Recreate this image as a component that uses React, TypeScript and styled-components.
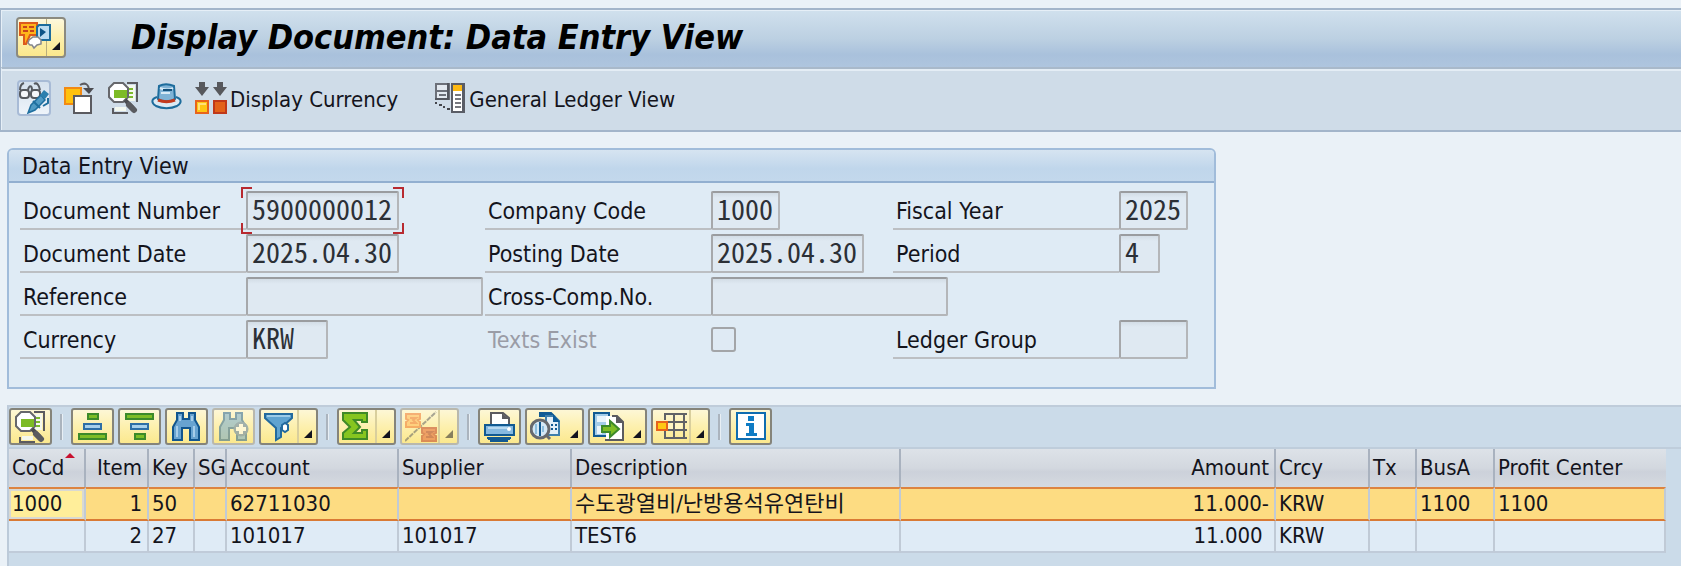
import React from 'react';
import styled, { createGlobalStyle, css } from 'styled-components';

const GlobalStyle = createGlobalStyle`
  *, *::before, *::after { box-sizing: border-box; }
  html { background: #eaf1f7; }
  body {
    margin: 0;
    color: #14141c;
    font: 23px/30px "DejaVu Sans Condensed", "Noto Sans", "Noto Sans CJK KR", sans-serif;
  }
  button, input { font: inherit; color: inherit; }
  svg { display: block; flex: none; }
`;

const Page = styled.div`
  display: flex;
  flex-direction: column;
  min-height: 100vh;
  background: #eaf1f7;
`;

const AppFrame = styled.header`
  margin-top: 8px;
  border: solid #a3b5ca;
  border-width: 2px 0 2px 1px;
`;

const TitleBar = styled.div`
  display: flex;
  align-items: center;
  gap: 65px;
  height: 57px;
  padding: 0 16px 4px 14px;
  border-top: 1px solid #e6eff7;
  border-left: 1px solid #e6eff7;
  background: linear-gradient(#d0e0ed, #bcd0e2 50%, #a9c1dc 78%, #afc5de);
`;

const Title = styled.h1`
  margin: 0;
  color: #000;
  font-size: 34px;
  line-height: 40px;
  font-style: italic;
  font-weight: 700;
  white-space: nowrap;
`;

const MenuButton = styled.button`
  display: flex;
  width: 50px;
  height: 41px;
  padding: 0;
  border: 2px solid #8b8a80;
  border-radius: 4px;
  background: linear-gradient(#fdf8dc, #fdf0ae 50%, #fbe88c);
`;

const ActionBar = styled.div`
  display: flex;
  align-items: center;
  gap: 12px;
  height: 63px;
  padding: 0 15px 4px;
  border-top: 2px solid #a9b9ca;
  border-left: 1px solid #e6eff7;
  background: #cfdce8;
  box-shadow: inset 0 2px #e4edf5;
`;

const ActionButton = styled.button<{ $framed?: boolean; $apart?: boolean }>`
  display: flex;
  align-items: center;
  gap: 3px;
  height: 36px;
  margin: 0 0 0 ${p => (p.$apart ? 24 : 0)}px;
  padding: 0;
  border: 0;
  background: none;
  font-size: 22px;
  white-space: nowrap;
  ${p => p.$framed && css`
    border: 2px solid #a8bbd6;
    border-radius: 4px;
    background: linear-gradient(#d5e1ee, #eef4fa);
  `}
`;

const ActionText = styled.span`
  padding-top: 4px;
`;

const GroupBox = styled.section`
  width: calc(100% - 14px);
  max-width: 1209px;
  margin: 16px 7px 0;
  border: 2px solid #a1bcda;
  border-radius: 6px 6px 0 0;
  background: #dfebf5;
`;

const GroupTitle = styled.h2`
  margin: 0;
  height: 33px;
  padding: 0 13px;
  border-bottom: 2px solid #92afd0;
  border-radius: 4px 4px 0 0;
  background: linear-gradient(#d6e4f1, #c0d6eb 60%, #c3d8ec);
  font-size: 23px;
  line-height: 33px;
  font-weight: 400;
`;

const FieldGrid = styled.div`
  display: grid;
  grid-template-columns: 465px 408px 1fr;
  row-gap: 4px;
  padding: 8px 11px 28px;
`;

const FieldRow = styled.div`
  display: flex;
  height: 39px;
`;

const FieldLabel = styled.label<{ $muted?: boolean }>`
  flex: none;
  width: 226px;
  padding: 5px 0 0 3px;
  border-bottom: 2px solid ${p => (p.$muted ? 'transparent' : '#bcbfc3')};
  color: ${p => (p.$muted ? '#9a9ca6' : 'inherit')};
  white-space: nowrap;
`;

const ValueWrap = styled.span`
  position: relative;
  display: flex;
`;

const ValueBox = styled.input<{ $w: number }>`
  width: ${p => p.$w}px;
  height: 39px;
  margin: 0;
  padding: 0 0 6px 4px;
  border: 2px solid #b4b6b9;
  border-top-color: #9a9c9f;
  border-left-color: #a6a8ab;
  border-radius: 2px;
  outline: 0;
  background: linear-gradient(#d3dde6, #dfe9f2 5px);
  color: #2c3036;
  font: 28px/29px "Noto Sans Mono CJK KR", "Liberation Mono", monospace;
`;

const Corner = styled.i<{ $at: 'tl' | 'tr' | 'bl' | 'br' }>`
  position: absolute;
  width: 11px;
  height: 11px;
  border: 0 solid #b82a30;
  ${p => (p.$at[0] === 't' ? 'top: -4px; border-top-width: 2px;' : 'bottom: -4px; border-bottom-width: 2px;')}
  ${p => (p.$at[1] === 'l' ? 'left: -5px; border-left-width: 2px;' : 'right: -5px; border-right-width: 2px;')}
`;

const Check = styled.input`
  appearance: none;
  width: 25px;
  height: 25px;
  margin: 7px 0 0;
  border: 2px solid #a3a5a8;
  border-radius: 3px;
  background: #dfeaf4;
`;

const Grid = styled.section`
  flex: 1;
  margin: 16px 0 0 7px;
  border-top: 2px solid #bfccda;
  border-left: 2px solid #bccad9;
  background: #cbdbe9;
`;

const GridTools = styled.div`
  display: flex;
  gap: 4px;
  height: 42px;
  padding-top: 1px;
  border-bottom: 2px solid #bfcddb;
`;

const Separator = styled.span`
  width: 3px;
  height: 26px;
  margin: 6px 4px 0;
  border-left: 2px solid #abb4be;
  border-right: 1px solid #e8eff5;
`;

const ToolButton = styled.button<{ $menu?: boolean }>`
  position: relative;
  display: flex;
  align-items: center;
  width: ${p => (p.$menu ? 59 : 43)}px;
  height: 37px;
  padding: 0 0 0 3px;
  border: 2px solid #85847a;
  border-radius: 3px;
  background: linear-gradient(#fdf7d6, #fdf0ae 50%, #fbe88e);
  &:disabled { border-color: #b9b8ad; color: inherit; }
  &:disabled svg { opacity: 0.5; }
`;

const MenuMark = styled.span<{ $split?: boolean }>`
  display: flex;
  align-items: flex-end;
  justify-content: flex-end;
  flex: 1;
  height: 33px;
  padding: 0 4px 5px 0;
  margin-left: 1px;
  border-left: 2px solid ${p => (p.$split ? '#d9cf9d' : 'transparent')};
`;

const TableScroll = styled.div`
  margin-right: 15px;
`;

const Table = styled.table`
  width: 100%;
  border-collapse: separate;
  border-spacing: 0;
  table-layout: fixed;
  font-size: 22px;
`;

const HeadCell = styled.th<{ $right?: boolean; $sorted?: boolean }>`
  position: relative;
  height: 38px;
  padding: 0 ${p => (p.$right ? 5 : 0)}px 0 3px;
  border-right: 2px solid #a9b2bf;
  background: linear-gradient(#dde2e8, #d3d8df 50%, #ccd1da 60%, #d5dae0);
  font-weight: 400;
  text-align: ${p => (p.$right ? 'right' : 'left')};
  white-space: nowrap;
  &:last-child { border-right: 0; }
  ${p => p.$sorted && css`
    &::after {
      content: '';
      position: absolute;
      top: 4px;
      right: 9px;
      border: solid transparent;
      border-width: 0 5px 5px;
      border-bottom-color: #c8102e;
    }
  `}
`;

const Row = styled.tr<{ $selected?: boolean }>`
  --fill: ${p => (p.$selected ? '#fddc82' : '#dfebf6')};
  --edge: ${p => (p.$selected ? '#d97a35' : '#c0cbd9')};
  --top: ${p => (p.$selected ? '2px solid #dd8440' : '0')};
`;

const Cell = styled.td<{ $right?: boolean; $cursor?: boolean }>`
  height: ${p => (p.$cursor ? 34 : 32)}px;
  padding: 0 ${p => (p.$right ? 5 : 3)}px 0 3px;
  overflow: hidden;
  border-top: var(--top);
  border-right: 2px solid #c0cad6;
  border-bottom: 2px solid var(--edge);
  background: ${p => (p.$cursor ? '#ffee9a' : 'var(--fill)')};
  box-shadow: ${p => (p.$cursor ? 'inset 0 0 0 2px #d9d9d2' : 'none')};
  text-align: ${p => (p.$right ? 'right' : 'left')};
  line-height: 28px;
  white-space: pre;
`;

/* ---------- icons ---------- */

const Pic = ({ children, w = 32, h = 32 }: { children: React.ReactNode; w?: number; h?: number }) => (
  <svg width={w} height={h} viewBox={`0 0 ${w} ${h}`} fill="none" aria-hidden="true">{children}</svg>
);

const Triangle = () => <Pic w={8} h={8}><path d="M8 0v8H0z" fill="#14141e" /></Pic>;

const MenuIcon = () => (
  <Pic w={46} h={37}>
    <path d="M28.500 0V37" stroke="#b9ae7c" strokeWidth="1" />
    <path d="M2 4h17v12h-7l-4 9H6V16H2z" fill="#ffb61a" stroke="#dd5a1c" strokeWidth="2" />
    <path d="M5 8h4m2 0h5M5 12h5m2 0h4" stroke="#c8421a" strokeWidth="2" />
    <path d="M21 6h11v15H19V8z" fill="#bcdcf0" stroke="#1d6c9c" strokeWidth="2" />
    <path d="M22 9l6 4-6 5z" fill="#0d5486" />
    <path d="M11 21l4-3h5l3 3v4l-4 1-3 3-2-3h-2l-2-2z" fill="#fff" stroke="#85878c" strokeWidth="1.500" />
    <path d="M42 23v8h-8z" fill="#14141e" />
  </Pic>
);

const EditIcon = () => (
  <Pic w={30} h={32}>
    <g stroke="#55595f" strokeWidth="2">
      <path d="M1 8c0-4 1-6 4-7M9 8c1-5 4-5 4 0M15 2c3-2 5 1 6 6" />
      <rect x="1" y="8" width="9" height="8" rx="3" fill="#f3f6fa" />
      <rect x="12" y="8" width="9" height="8" rx="3" fill="#f3f6fa" />
    </g>
    <path d="M9 31l3-8 10-10 4 5-10 10z" fill="#4f9ac4" stroke="#1f6f9f" strokeWidth="1.500" />
    <path d="M25 8l5 4-4 5-5-4z" fill="#2c7fae" />
    <path d="M14 19l7 7M29 16v5l-5 3" stroke="#1f6f9f" strokeWidth="2" />
  </Pic>
);

const CopyIcon = () => (
  <Pic>
    <path d="M2 6h16v16H2z" fill="#ffc20e" stroke="#f28a14" strokeWidth="2" />
    <path d="M11 14h17v17H11z" fill="#fff" stroke="#5b5b60" strokeWidth="2" />
    <path d="M17 3c5-3 9-1 9 6" stroke="#5b5b60" strokeWidth="2" />
    <path d="M20 6h11l-5 6z" fill="#4b4b50" />
  </Pic>
);

const DetailIcon = () => (
  <Pic>
    <path d="M20 1h10v19M6 26v5h15" stroke="#5b5b60" strokeWidth="2" />
    <path d="M20 3h8v16h-8zM8 25h11v4H8z" fill="#f4f8ee" />
    <path d="M20 7h6M20 11h6M20 15h6" stroke="#7cba2c" strokeWidth="2" />
    <path d="M7 1h9l5 5v9l-5 5H7l-5-5V6z" fill="#fff" stroke="#66676b" strokeWidth="2" />
    <path d="M7 8h13v8H7z" fill="#7dbb25" />
    <path d="M18 18l8 8" stroke="#4b4c50" strokeWidth="4" />
    <path d="M22 23l5 5" stroke="#5a5b5f" strokeWidth="6" strokeLinecap="round" />
  </Pic>
);

const HatIcon = () => (
  <Pic>
    <path d="M6 15C0 17 0 21 5 24c6 3 15 3 21 0 5-3 5-7-1-9" fill="#dceaf4" stroke="#1d6c9c" strokeWidth="2" />
    <path d="M8 4c4-2 10-2 15 0l1 13c-4 3-13 3-17 0z" fill="#7fb3d6" stroke="#1d6c9c" strokeWidth="2" />
    <path d="M9 6c4 2 10 2 13 0M10 11h9" stroke="#d8eaf5" strokeWidth="2" />
    <path d="M12 8h9" stroke="#14527c" strokeWidth="2" />
    <path d="M7 18c5 2 12 2 17 0" stroke="#c33a1e" strokeWidth="3" />
  </Pic>
);

const CurrencyIcon = () => (
  <Pic>
    <path d="M4 0h6v5h4l-7 9-7-9h4zM22 0h6v5h4l-7 9-7-9h4z" fill="#57585c" />
    <path d="M1 19h12v12H1z" fill="#ffc814" stroke="#e8641c" strokeWidth="2" />
    <path d="M19 19h12v12H19z" fill="#e3621a" stroke="#c0391a" strokeWidth="2" />
    <path d="M4 28V22h7" stroke="#ffe27a" strokeWidth="2" />
  </Pic>
);

const LedgerIcon = () => (
  <Pic>
    <path d="M2 2h13v15H2z" fill="#e3e9f0" stroke="#6c7079" strokeWidth="2" />
    <path d="M2 9h13M5 13h7" stroke="#6c7079" strokeWidth="2" />
    <path d="M14 1v16H1" stroke="#53565e" strokeWidth="2" />
    <path d="M18 2h12v28H18z" fill="#fff" stroke="#5a5d66" strokeWidth="2" />
    <path d="M19 3h10v6H19z" fill="#fdb913" />
    <path d="M29.500 2v28" stroke="#5a5d66" strokeWidth="3" />
    <path d="M21 13h6M21 17h6M21 21h6M21 25h6" stroke="#76787e" strokeWidth="2" />
    <path d="M1 21h2M5 23h3M9 25h2M13 27h3" stroke="#44464c" strokeWidth="2" />
  </Pic>
);

const SortIcon = ({ down = false }: { down?: boolean }) => (
  <Pic>
    <g strokeWidth="2">
      <path d={down ? 'M3 3h27v5H3z' : 'M12 3h10v5H12z'} fill="#7ebd26" stroke="#3c8a2a" />
      <path d="M8 13h17v5H8z" fill="#a7cfec" stroke="#2e6ea6" />
      <path d={down ? 'M12 23h10v5H12z' : 'M3 23h27v5H3z'} fill="#7ebd26" stroke="#3c8a2a" />
    </g>
  </Pic>
);

const Binoculars = () => (
  <path d="M7 2h6v6h6V2h6v7l4 7v13h-9V17h-8v12H3V16l4-7z" fill="#68a3d0" stroke="#12568f" strokeWidth="2" />
);

const FindIcon = () => (
  <Pic><Binoculars /><path d="M7 15v11M24 15v11M10 5v5M22 5v5" stroke="#a6cdea" strokeWidth="2" /></Pic>
);

const FindNextIcon = () => (
  <Pic>
    <Binoculars />
    <circle cx="24" cy="18" r="7" fill="#4a72a6" stroke="#4671a2" strokeWidth="1" />
    <path d="M24 13v10M19 18h10" stroke="#fff" strokeWidth="4" />
  </Pic>
);

const FilterIcon = () => (
  <Pic>
    <path d="M1 3h27v4L17 17v9l-5 3V17L1 7z" fill="#5fa3d0" stroke="#236a9e" strokeWidth="2" />
    <path d="M3 5h23" stroke="#9ccbe8" strokeWidth="2" />
    <path d="M18 14l3-2 3 2v5l-3 2-3-2z" fill="#fff" stroke="#236a9e" strokeWidth="2" />
  </Pic>
);

const sigma = 'M1 2h24v9h-5V9h-8l6 7-6 6h8v-3h5v9H1v-6l7-6-7-7z';

const SumIcon = () => <Pic><path d={sigma} fill="#86c51f" stroke="#3f8a27" strokeWidth="2" /></Pic>;

const SubtotalIcon = () => (
  <Pic>
    <path d="M0 30L31 1" stroke="#55575d" strokeWidth="2" strokeDasharray="5 1" />
    <path d="M1 3h14v5l-2 1 2 2v5H1v-5l2-2-2-1z" fill="#ffb14a" stroke="#ee6c1e" strokeWidth="2" />
    <path d="M5 7h6l-3 2 3 3H5" stroke="#ee6c1e" strokeWidth="2" />
    <path d="M17 17h14v5l-2 1 2 2v5H17v-5l2-2-2-1z" fill="#e2582a" stroke="#bd3218" strokeWidth="2" />
    <path d="M21 21h6l-3 2 3 3h-6" stroke="#a82a18" strokeWidth="2" />
  </Pic>
);

const PrintIcon = () => (
  <Pic>
    <path d="M8 13V2h12l6 5v6" fill="#fff" stroke="#5b5b60" strokeWidth="2" />
    <path d="M19 2v6h7z" fill="#5b5b60" />
    <path d="M2 14h29v10H2z" fill="#86b9e0" stroke="#125a92" strokeWidth="2" />
    <path d="M5 17h19" stroke="#b9d9f0" strokeWidth="2" />
    <circle cx="26" cy="18" r="2" fill="#fff" />
    <path d="M4 27h24M7 30h18" stroke="#125a92" strokeWidth="2" />
    <path d="M5 28h22" stroke="#125a92" strokeWidth="2" />
  </Pic>
);

const PreviewIcon = () => (
  <Pic>
    <path d="M10 6V2h11l4 4" fill="#0f5c97" stroke="#125a92" strokeWidth="2" />
    <path d="M16 5h8l5 5v14H16z" fill="#e3eff8" stroke="#3f7fac" strokeWidth="2" />
    <path d="M23 3l7 8h-7z" fill="#0f5c97" />
    <path d="M21 14h2m2 0h2M21 18h2m2 0h2" stroke="#125a92" strokeWidth="2" />
    <circle cx="10" cy="18" r="9" fill="#d5e8f5" stroke="#67696e" strokeWidth="3" />
    <path d="M6 13v10M13 15v6" stroke="#8dbddd" strokeWidth="2" />
    <path d="M10 11v14" stroke="#125a92" strokeWidth="2" />
    <path d="M16 24l4 4" stroke="#67696e" strokeWidth="3" />
  </Pic>
);

const ExportIcon = () => (
  <Pic>
    <path d="M1 2h15v23H1z" fill="#a5cde9" stroke="#125a92" strokeWidth="2" />
    <path d="M4 5h9v6H4zM4 15h5v8H4z" fill="#e9f4fb" />
    <path d="M13 29V5h11l6 6v18z" fill="#fff" />
    <path d="M19 5h5l6 6v18H12" stroke="#5b5b60" strokeWidth="2" />
    <path d="M23 4l8 8h-8z" fill="#5b5b60" />
    <path d="M9 15h8v-5l9 8-9 8v-5H9z" fill="#7ebd26" stroke="#3c8a2a" strokeWidth="2" />
  </Pic>
);

const LayoutIcon = () => (
  <Pic>
    <path d="M8 3h23M8 11h23M8 19h23M8 27h23M9 2v7M9 20v8M18 2v26M28 2v26" stroke="#606267" strokeWidth="2" />
    <path d="M10 12h16v6H10z" fill="#fff6c4" />
    <path d="M18 11v8" stroke="#606267" strokeWidth="2" />
    <path d="M1 11h10v8H1z" fill="#ffc814" stroke="#e8641c" strokeWidth="2" />
  </Pic>
);

const InfoIcon = () => (
  <Pic>
    <path d="M3 2h28v26H3z" fill="#fff" stroke="#0f6db0" strokeWidth="2" />
    <path d="M14 5h6v5h-6zM12 12h8v10h3v3H12v-3h3v-7h-3z" fill="#0f7cc4" />
  </Pic>
);

/* ---------- form ---------- */

type Field = { id: string; label: string; value?: string; w: number; focus?: boolean; check?: boolean } | null;

const fields: Field[] = [
  { id: 'docno', label: 'Document Number', value: '5900000012', w: 153, focus: true },
  { id: 'cocode', label: 'Company Code', value: '1000', w: 69 },
  { id: 'year', label: 'Fiscal Year', value: '2025', w: 69 },
  { id: 'docdate', label: 'Document Date', value: '2025.04.30', w: 153 },
  { id: 'postdate', label: 'Posting Date', value: '2025.04.30', w: 153 },
  { id: 'period', label: 'Period', value: '4', w: 41 },
  { id: 'ref', label: 'Reference', value: '', w: 237 },
  { id: 'cross', label: 'Cross-Comp.No.', value: '', w: 237 },
  null,
  { id: 'currency', label: 'Currency', value: 'KRW', w: 82 },
  { id: 'texts', label: 'Texts Exist', w: 25, check: true },
  { id: 'ledger', label: 'Ledger Group', value: '', w: 69 },
];

const FieldItem = ({ field }: { field: Field }) => {
  if (!field) return <span />;
  return (
    <FieldRow>
      <FieldLabel htmlFor={field.id} $muted={field.check}>{field.label}</FieldLabel>
      {field.check ? (
        <Check id={field.id} type="checkbox" disabled />
      ) : (
        <ValueWrap>
          <ValueBox id={field.id} $w={field.w} defaultValue={field.value} readOnly />
          {field.focus && (['tl', 'tr', 'bl', 'br'] as const).map(at => <Corner key={at} $at={at} />)}
        </ValueWrap>
      )}
    </FieldRow>
  );
};

/* ---------- line item list ---------- */

type Tool = { name: string; icon: React.ReactNode; menu?: boolean; split?: boolean; disabled?: boolean } | null;

const tools: Tool[] = [
  { name: 'Details', icon: <DetailIcon /> },
  null,
  { name: 'Sort ascending', icon: <SortIcon /> },
  { name: 'Sort descending', icon: <SortIcon down /> },
  { name: 'Find', icon: <FindIcon /> },
  { name: 'Find next', icon: <FindNextIcon />, disabled: true },
  { name: 'Filter', icon: <FilterIcon />, menu: true, split: true },
  null,
  { name: 'Total', icon: <SumIcon />, menu: true, split: true },
  { name: 'Subtotals', icon: <SubtotalIcon />, menu: true, split: true, disabled: true },
  null,
  { name: 'Print', icon: <PrintIcon /> },
  { name: 'Views', icon: <PreviewIcon />, menu: true },
  { name: 'Export', icon: <ExportIcon />, menu: true },
  { name: 'Choose layout', icon: <LayoutIcon />, menu: true, split: true },
  null,
  { name: 'Information', icon: <InfoIcon /> },
];

const columns = [
  { title: 'CoCd', w: 77, sorted: true },
  { title: 'Item', w: 63, right: true },
  { title: 'Key', w: 46 },
  { title: 'SG', w: 32 },
  { title: 'Account', w: 172 },
  { title: 'Supplier', w: 173 },
  { title: 'Description', w: 329 },
  { title: 'Amount', w: 375, right: true },
  { title: 'Crcy', w: 94 },
  { title: 'Tx', w: 47 },
  { title: 'BusA', w: 78 },
  { title: 'Profit Center' },
];

const rows: string[][] = [
  ['1000', '1', '50', '', '62711030', '', '수도광열비/난방용석유연탄비', '11.000-', 'KRW', '', '1100', '1100'],
  ['', '2', '27', '', '101017', '101017', 'TEST6', '11.000 ', 'KRW', '', '', ''],
];

export default function App() {
  return (
    <Page>
      <GlobalStyle />
      <AppFrame>
        <TitleBar>
          <MenuButton aria-label="Services for object"><MenuIcon /></MenuButton>
          <Title>Display Document: Data Entry View</Title>
        </TitleBar>
        <ActionBar>
          <ActionButton $framed aria-label="Display or change"><EditIcon /></ActionButton>
          <ActionButton aria-label="Other document"><CopyIcon /></ActionButton>
          <ActionButton aria-label="Line item"><DetailIcon /></ActionButton>
          <ActionButton aria-label="Header"><HatIcon /></ActionButton>
          <ActionButton><CurrencyIcon /><ActionText>Display Currency</ActionText></ActionButton>
          <ActionButton $apart><LedgerIcon /><ActionText>General Ledger View</ActionText></ActionButton>
        </ActionBar>
      </AppFrame>

      <GroupBox>
        <GroupTitle>Data Entry View</GroupTitle>
        <FieldGrid>
          {fields.map((f, i) => <FieldItem key={f ? f.id : i} field={f} />)}
        </FieldGrid>
      </GroupBox>

      <Grid>
        <GridTools>
          {tools.map((t, i) =>
            t ? (
              <ToolButton key={t.name} aria-label={t.name} $menu={t.menu} disabled={t.disabled}>
                {t.icon}
                {t.menu && <MenuMark $split={t.split}><Triangle /></MenuMark>}
              </ToolButton>
            ) : (
              <Separator key={i} />
            ),
          )}
        </GridTools>
        <TableScroll>
          <Table>
            <colgroup>
              {columns.map(c => <col key={c.title} width={c.w} />)}
            </colgroup>
            <thead>
              <tr>
                {columns.map(c => (
                  <HeadCell key={c.title} $right={c.right} $sorted={c.sorted}>{c.title}</HeadCell>
                ))}
              </tr>
            </thead>
            <tbody>
              {rows.map((cells, r) => (
                <Row key={r} $selected={r === 0}>
                  {cells.map((value, c) => (
                    <Cell key={c} $right={columns[c].right} $cursor={r === 0 && c === 0}>{value}</Cell>
                  ))}
                </Row>
              ))}
            </tbody>
          </Table>
        </TableScroll>
      </Grid>
    </Page>
  );
}
